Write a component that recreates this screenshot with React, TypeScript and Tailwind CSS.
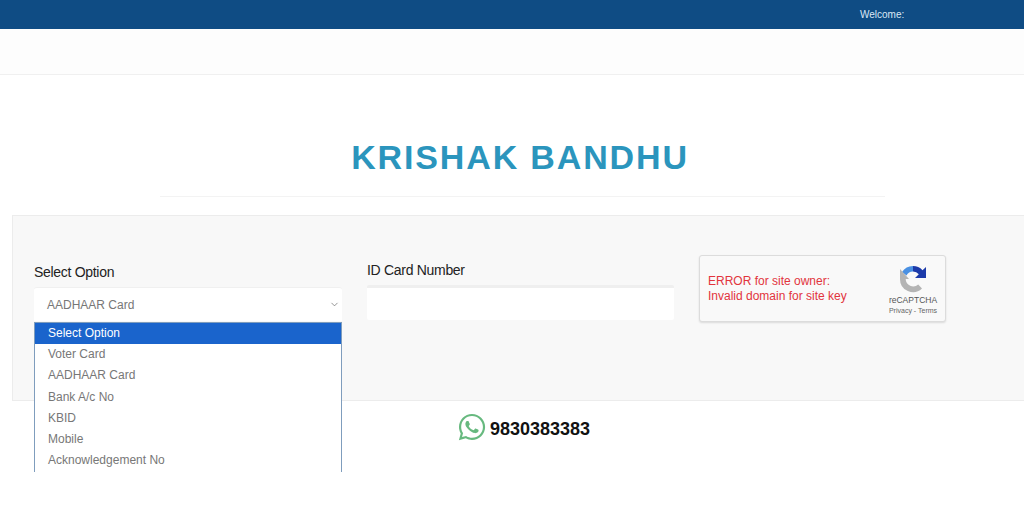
import { ChevronDown } from "lucide-react";
import { FaWhatsapp } from "react-icons/fa";

const options = [
  "Voter Card",
  "AADHAAR Card",
  "Bank A/c No",
  "KBID",
  "Mobile",
  "Acknowledgement No",
];

function RecaptchaLogo() {
  return (
    <svg width="28" height="28" viewBox="0 0 28 28" fill="none">
      <path d="M14 1a13 13 0 0 0-11 6l4.5 3.6A7.5 7.5 0 0 1 14 6.500z" fill="#4a90e2" />
      <path d="M14 1a13 13 0 0 1 9.500 4.200L27 2v11H16l3.800-3.800A7.500 7.500 0 0 0 14 6.500z" fill="#1c3aa9" />
      <path d="M1 14a13 13 0 0 0 22 9.500l-3.800-4A7.500 7.500 0 0 1 6.700 14H10L1 4z" fill="#b4b4b4" />
    </svg>
  );
}

export default function App() {
  return (
    <div className="h-[512px] overflow-hidden bg-white font-['Liberation_Sans',sans-serif]">
      <div className="flex h-[29px] items-center bg-[#0f4c84] pl-[860px] text-[10px] text-[#dbe8f5]">
        Welcome:
      </div>
      <div className="h-[46px] border-b border-[#f0f0f0] bg-[#fdfdfd]" />

      <div className="pl-[16px] pt-[60px] text-center">
        <h1 className="text-[34px] leading-[44px] font-bold tracking-[1.85px] text-[#2b95bd]">
          KRISHAK BANDHU
        </h1>
      </div>
      <div className="mt-[17px] ml-[160px] h-px w-[725px] bg-[#f3f3f3]" />

      <div className="mt-[18px] ml-[12px] h-[186px] border border-r-0 border-[#ececec] bg-[#f8f8f8] pt-[46px] pl-[21px]">
        <div className="flex items-start">
          <div className="relative w-[308px] pt-[2px]">
            <label className="block text-[14px] leading-[16px] tracking-[-0.3px] text-[#222]">
              Select Option
            </label>
            <div className="mt-[7px] flex h-[34px] items-center justify-between rounded-t-[3px] border-t border-[#f0f0f0] bg-white pr-[2px] pl-[13px] text-[12px] text-[#777]">
              AADHAAR Card
              <ChevronDown size={11} strokeWidth={1.5} className="text-[#666]" />
            </div>
            <button className="mt-[22px] h-[24px] w-[80px] bg-[#1c5fae]" />
            <div className="absolute top-[60px] left-0 h-[150px] w-[308px] overflow-hidden border-x border-t border-[#7f9dbd] bg-white text-[12px] leading-[21.300px] text-[#777]">
              <div className="h-[21px] bg-[#1a64cc] pl-[13px] text-white">Select Option</div>
              {options.map((o) => (
                <div key={o} className="pl-[13px]">
                  {o}
                </div>
              ))}
            </div>
          </div>

          <div className="ml-[25px] w-[307px]">
            <label className="block text-[14px] leading-[16px] tracking-[-0.3px] text-[#222]">
              ID Card Number
            </label>
            <div className="mt-[7px] h-[35px] rounded-[2px] border-t-[3px] border-[#efefef] bg-white" />
          </div>

          <div className="mt-[-7px] ml-[25px] flex h-[67px] w-[247px] items-start justify-between rounded-[3px] border border-[#dcdcdc] bg-[#f9f9f9] shadow-[0_1px_2px_rgba(0,0,0,0.12)]">
            <div className="pt-[18px] pl-[8px] text-[12px] leading-[14.500px] text-[#e2343c]">
              <p>ERROR for site owner:</p>
              <p>Invalid domain for site key</p>
            </div>
            <div className="flex w-[56px] flex-col items-center pt-[9px] pr-[8px]">
              <RecaptchaLogo />
              <p className="mt-[1px] text-[8.500px] leading-[12px] whitespace-nowrap text-[#555]">reCAPTCHA</p>
              <p className="text-[7px] leading-[10px] whitespace-nowrap text-[#666]">Privacy - Terms</p>
            </div>
          </div>
        </div>
      </div>

      <div className="mt-[9px] flex items-center pl-[457px]">
        <FaWhatsapp size={30} className="text-[#67b97f]" />
        <span className="mt-[6px] ml-[3px] text-[18px] font-bold text-[#111]">9830383383</span>
      </div>
    </div>
  );
}
